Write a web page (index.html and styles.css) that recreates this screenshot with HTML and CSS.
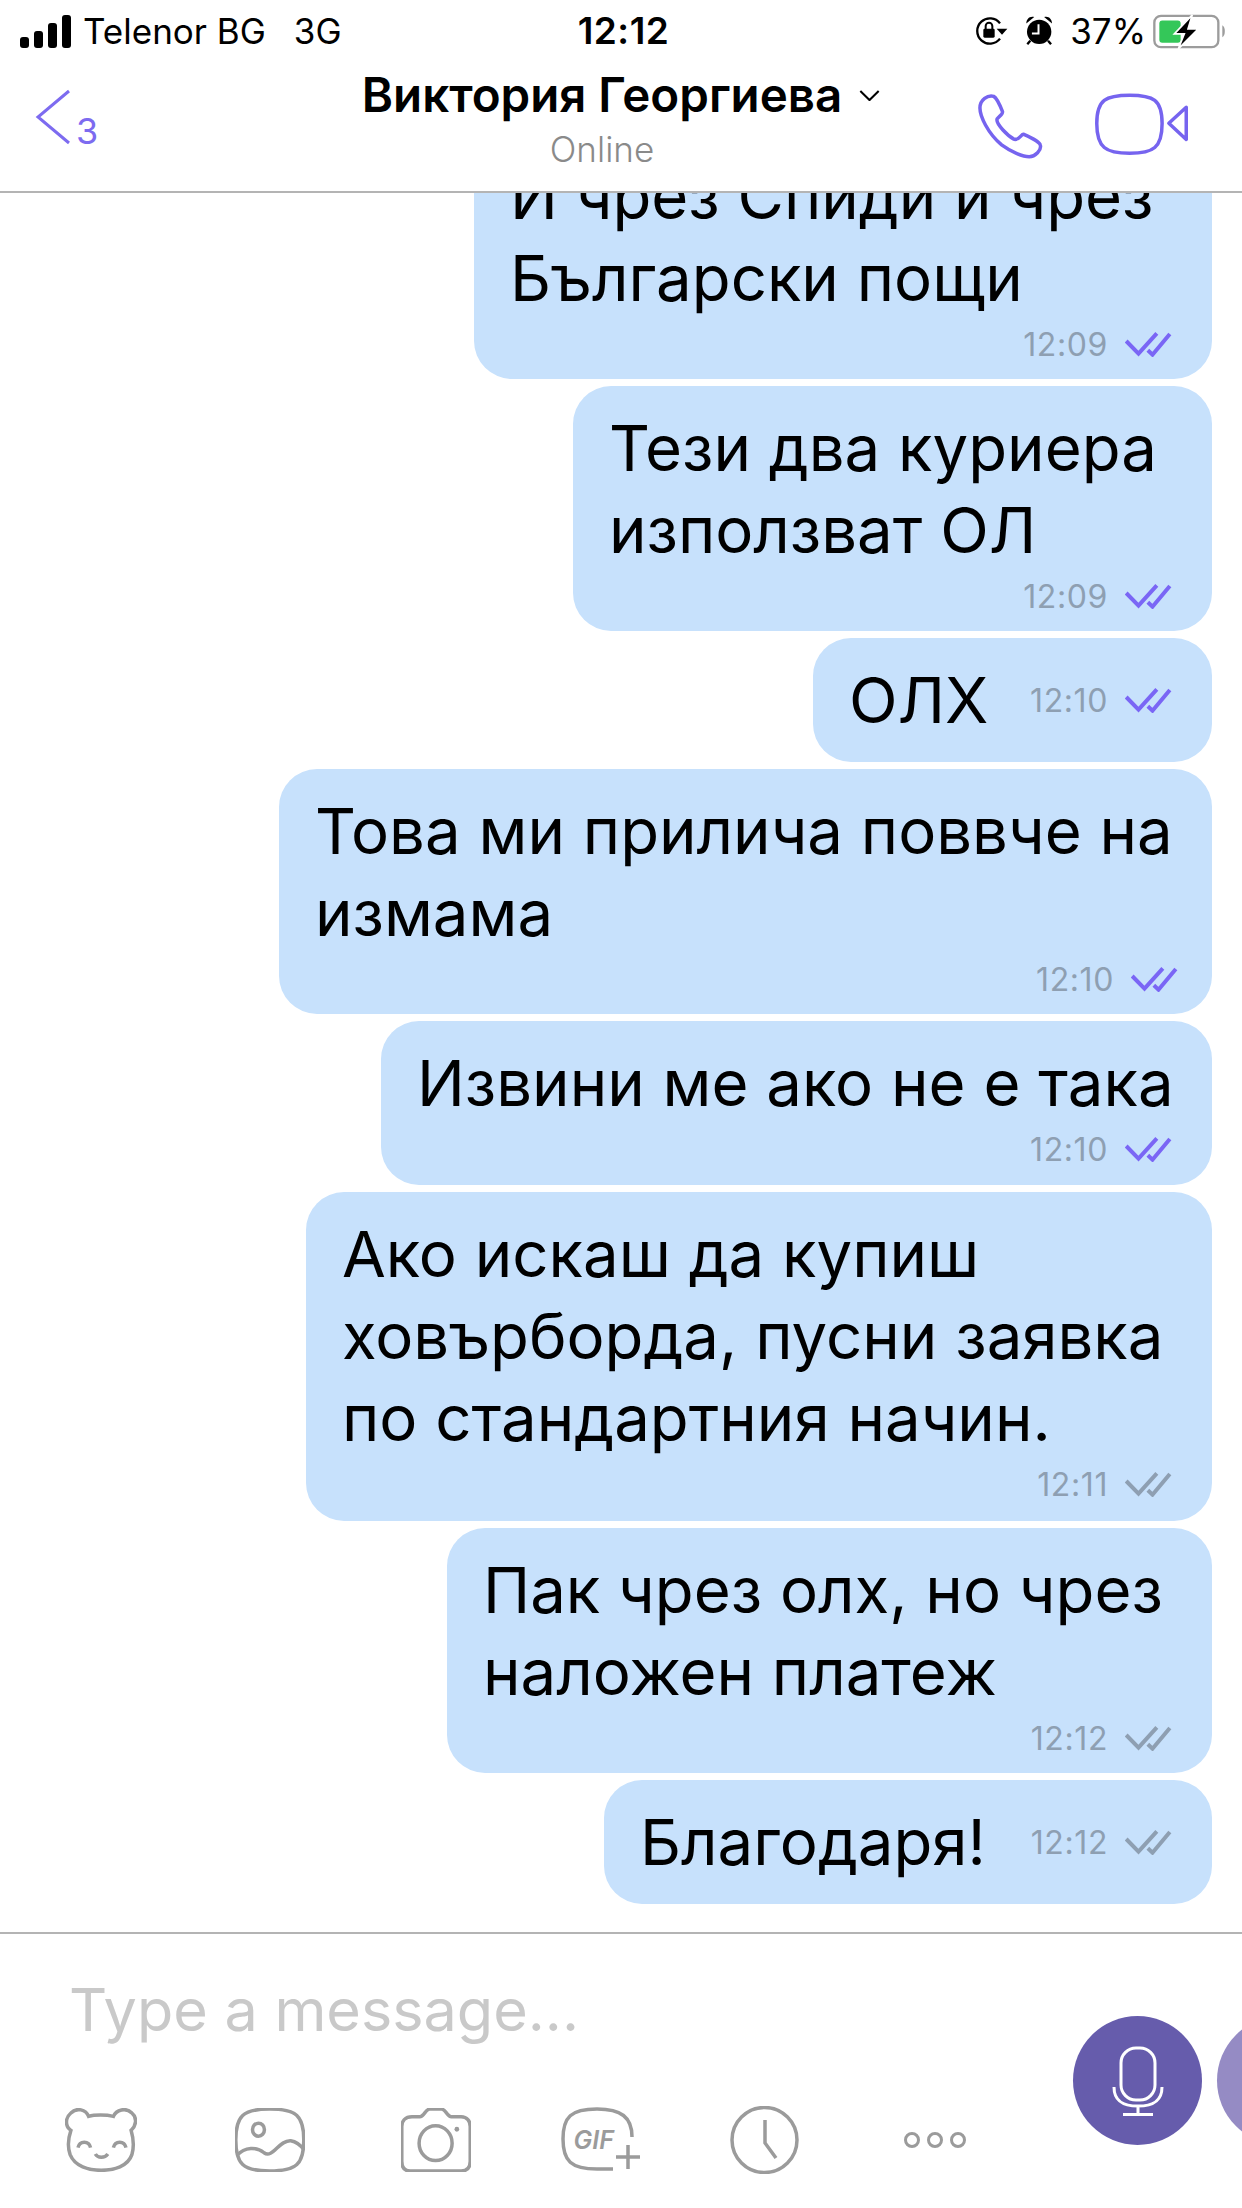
FILE: index.html
```html
<!DOCTYPE html>
<html lang="bg">
<head>
  <meta charset="UTF-8" />
  <title>Виктория Георгиева</title>
  <link rel="stylesheet" href="styles.css">
</head>
<body>

  <svg class="defs" width="0" height="0">
    <symbol id="ticks" viewBox="500 95 140 75">
      <path d="M503 122 L540 160 L595 99 M568 150 L582 163 L634 101" fill="none" stroke="currentColor" stroke-width="12"/>
    </symbol>
  </svg>

  <div class="page">

    <!-- Status bar -->
    <div class="status">
      <div class="status-left">
        <div class="signal"><i class="b1"></i><i class="b2"></i><i class="b3"></i><i class="b4"></i></div>
        <span class="carrier">Telenor BG</span>
        <span class="network">3G</span>
      </div>
      <div class="clock">12:12</div>
      <div class="status-right">
        <svg class="ic-rotate" viewBox="50 50 102 90">
          <path d="M128 118 A38 38 0 1 1 128 72" fill="none" stroke="#000" stroke-width="7"/>
          <path d="M118 88 H150 L134 106 Z" fill="#000"/>
          <rect x="78" y="88" width="34" height="27" rx="4" fill="#000"/>
          <path d="M85 90 V80 A10 10 0 0 1 105 80 V90" fill="none" stroke="#000" stroke-width="6"/>
        </svg>
        <svg class="ic-alarm" viewBox="200 45 88 95">
          <circle cx="243" cy="95" r="37" fill="#000"/>
          <path d="M204 70 C204 55 215 46 228 50 Z M282 70 C282 55 271 46 258 50 Z" fill="#000"/>
          <path d="M216 122 L207 133 M270 122 L279 133" fill="none" stroke="#000" stroke-width="7"/>
          <path d="M241 72 V100 H221" fill="none" stroke="#fff" stroke-width="6"/>
        </svg>
        <span class="percent">37%</span>
        <svg class="ic-battery" viewBox="575 35 225 110">
          <rect x="582" y="43" width="192" height="94" rx="20" fill="none" stroke="#9c9c9c" stroke-width="7"/>
          <rect x="597" y="57" width="64" height="67" rx="9" fill="#34c759"/>
          <path d="M786 71 C796 76 796 102 786 107 Z" fill="#9c9c9c"/>
          <path d="M696 40 L642 97 H672 L654 142 L714 82 H683 Z" fill="#000" stroke="#fff" stroke-width="5"/>
        </svg>
      </div>
    </div>

    <!-- Cabecera del chat -->
    <header class="chat-head">
      <div class="back">
        <svg class="ic-back" viewBox="0 0 36 56">
          <path d="M34 2 L3 28 L34 54" fill="none" stroke="#7d6bf0" stroke-width="3"/>
        </svg>
        <span class="back-count">3</span>
      </div>
      <div class="title">
        <div class="name-row">
          <span class="name">Виктория Георгиева</span>
          <svg class="ic-chevron" viewBox="0 0 22 12">
            <path d="M1 1 L11 11 L21 1" fill="none" stroke="#000" stroke-width="2.200"/>
          </svg>
        </div>
        <div class="online">Online</div>
      </div>
      <div class="calls">
        <svg class="ic-phone" viewBox="895 275 175 200" preserveAspectRatio="none">
          <path d="M940 285 C925 280 905 295 905 320 C905 345 925 395 960 430 C985 452 1015 465 1030 465 C1045 465 1062 445 1058 430 C1056 420 1025 403 1015 398 C1010 397 1003 420 990 412 C975 402 948 370 948 355 C948 347 965 340 962 330 C958 318 948 290 940 285 Z"/>
        </svg>
        <svg class="ic-video" viewBox="1195 280 245 190" preserveAspectRatio="none">
          <path d="M1285 287 C1345 287 1367 300 1367 372 C1367 445 1345 462 1285 462 C1225 462 1202 445 1202 372 C1202 300 1225 287 1285 287 Z"/>
          <path d="M1428 323 L1384 371 L1428 420 Z"/>
        </svg>
      </div>
    </header>

    <!-- Mensajes -->
    <main class="messages">
      <div class="bubble w738">
        <p>И чрез Спиди и чрез<br>Български пощи</p>
        <div class="meta"><span>12:09</span><svg class="ticks read"><use href="#ticks"/></svg></div>
      </div>
      <div class="bubble w639">
        <p>Тези два куриера<br>използват ОЛ</p>
        <div class="meta"><span>12:09</span><svg class="ticks read"><use href="#ticks"/></svg></div>
      </div>
      <div class="bubble inline w399">
        <p>ОЛХ</p>
        <div class="meta"><span>12:10</span><svg class="ticks read"><use href="#ticks"/></svg></div>
      </div>
      <div class="bubble w933">
        <p>Това ми прилича поввче на<br>измама</p>
        <div class="meta"><span>12:10</span><svg class="ticks read"><use href="#ticks"/></svg></div>
      </div>
      <div class="bubble w831">
        <p>Извини ме ако не е така</p>
        <div class="meta"><span>12:10</span><svg class="ticks read"><use href="#ticks"/></svg></div>
      </div>
      <div class="bubble w906">
        <p>Ако искаш да купиш<br>ховърборда, пусни заявка<br>по стандартния начин.</p>
        <div class="meta"><span>12:11</span><svg class="ticks"><use href="#ticks"/></svg></div>
      </div>
      <div class="bubble w765">
        <p>Пак чрез олх, но чрез<br>наложен платеж</p>
        <div class="meta"><span>12:12</span><svg class="ticks"><use href="#ticks"/></svg></div>
      </div>
      <div class="bubble inline w608">
        <p>Благодаря!</p>
        <div class="meta"><span>12:12</span><svg class="ticks"><use href="#ticks"/></svg></div>
      </div>
    </main>

    <!-- Caja de texto -->
    <footer class="composer">
      <div class="composer-main">
        <div class="placeholder">Type a message...</div>
        <div class="tools">
          <svg class="tool w72" viewBox="165 625 183 192" preserveAspectRatio="none">
            <path d="M225 650 C240 645 270 645 288 650 C295 630 320 622 335 640 C350 655 345 680 333 692 C340 720 340 745 335 765 C325 800 290 812 257 812 C225 812 190 800 178 765 C172 745 172 720 180 692 C165 680 165 655 180 640 C195 622 218 630 225 650 Z"/>
            <path d="M198 744 C202 722 226 722 230 744 M288 744 C292 722 316 722 320 744 M242 763 C248 776 266 776 274 763"/>
          </svg>
          <svg class="tool w70" viewBox="595 627 176 186" preserveAspectRatio="none">
            <path d="M682 630 C750 630 768 650 768 720 C768 790 750 810 682 810 C615 810 597 790 597 720 C597 650 615 630 682 630 Z"/>
            <ellipse cx="654" cy="690" rx="15" ry="19"/>
            <path d="M600 765 C620 738 650 740 668 757 C690 775 705 720 735 722 C750 725 760 735 768 748"/>
          </svg>
          <svg class="tool w70" viewBox="1012 627 178 184" preserveAspectRatio="none">
            <path d="M1040 652 H1060 C1070 652 1075 630 1085 630 H1115 C1125 630 1130 652 1140 652 H1165 C1180 652 1188 665 1188 680 V780 C1188 800 1178 808 1165 808 H1035 C1022 808 1014 800 1014 780 V680 C1014 665 1022 652 1040 652 Z"/>
            <ellipse cx="1100" cy="728" rx="42" ry="50"/>
            <ellipse class="solid" cx="1154" cy="688" rx="6" ry="7"/>
          </svg>
          <div class="gif">
            <svg viewBox="0 0 79 66">
              <path d="M71 30 C71 10 60 2 36 2 C10 2 2 10 2 32 C2 54 10 62 36 62 H52"/>
              <path d="M67 38 V62 M55 50 H79"/>
            </svg>
            <span>GIF</span>
          </div>
          <svg class="tool w69" viewBox="0 0 69 68">
            <circle cx="34.500" cy="34" r="32.500"/>
            <path d="M35 14 V37 L46 52"/>
          </svg>
          <div class="dots"><i></i><i></i><i></i></div>
        </div>
      </div>
      <div class="actions">
        <div class="round">
          <svg class="ic-mic" viewBox="0 0 52 70">
            <rect x="9" y="2" width="34" height="52" rx="15"/>
            <path d="M2 41 C2 56 12 60 26 60 C40 60 50 56 50 41 M26 60 V68 M11 68.500 H41"/>
          </svg>
        </div>
        <div class="round second"></div>
      </div>
    </footer>

  </div>

</body>
</html>
```

FILE: styles.css
```css
* {
  box-sizing: border-box;
}

html,
body {
  margin: 0;
  height: 100%;
  background: #fff;
  overflow: hidden;
}

body {
  font-family: Inter, "Liberation Sans", sans-serif;
  color: #000;
}

.defs {
  position: absolute;
}

.page {
  width: 1242px;
  height: 2208px;
  display: flex;
  flex-direction: column;
  overflow: hidden;
}

/* Status bar */
.status {
  height: 60px;
  padding: 14px 15px 0 20px;
  display: grid;
  grid-template-columns: 1fr auto 1fr;
  flex-shrink: 0;
}

.status-left,
.status-right {
  display: flex;
  align-items: center;
  height: 34px;
}

.status-right {
  justify-content: flex-end;
}

.signal {
  display: flex;
  align-items: flex-end;
  gap: 5px;
  height: 33px;
  width: 51px;
}

.signal i {
  width: 9px;
  background: #000;
  border-radius: 3px;
}

.signal .b1 { height: 11px; }
.signal .b2 { height: 17px; }
.signal .b3 { height: 25px; }
.signal .b4 { height: 33px; }

.carrier {
  margin-left: 12px;
  font-size: 35px;
}

.network {
  margin-left: 28px;
  font-size: 35px;
}

.clock {
  font-size: 37px;
  font-weight: 600;
  letter-spacing: 0.500px;
  line-height: 34px;
}

.ic-rotate {
  width: 34px;
  height: 30px;
}

.ic-alarm {
  width: 29px;
  height: 32px;
  margin-left: 17px;
}

.percent {
  margin-left: 16px;
  font-size: 35px;
}

.ic-battery {
  width: 75px;
  height: 37px;
  margin-left: 6px;
}

/* Cabecera */
.chat-head {
  height: 133px;
  flex-shrink: 0;
  display: grid;
  grid-template-columns: 300px 604px 1fr;
  border-bottom: 2px solid #b4b4b4;
}

.back {
  display: flex;
  align-items: flex-start;
  padding: 29px 0 0 35px;
}

.ic-back {
  width: 36px;
  height: 56px;
}

.back-count {
  margin: 24px 0 0 5px;
  font-size: 36px;
  line-height: 36px;
  color: #7d6bf0;
}

.title {
  text-align: center;
  padding-top: 7px;
}

.name-row {
  display: flex;
  justify-content: center;
  align-items: center;
  height: 54px;
}

.name {
  font-weight: 600;
  font-size: 47.500px;
  white-space: nowrap;
}

.ic-chevron {
  width: 21px;
  height: 11px;
  margin: 2px -38px 0 17px;
  flex-shrink: 0;
}

.online {
  margin-top: 10px;
  font-weight: 300;
  font-size: 35px;
  line-height: 36px;
  color: #8a8a8a;
}

.calls {
  display: flex;
  align-items: flex-start;
  padding: 33px 0 0 72px;
}

.calls path {
  fill: none;
  stroke: #7664ef;
  stroke-width: 3.500px;
  stroke-linejoin: round;
  vector-effect: non-scaling-stroke;
}

.ic-phone {
  width: 69px;
  height: 67px;
}

.ic-video {
  width: 97px;
  height: 63px;
  margin-left: 49px;
}

/* Mensajes */
.messages {
  flex: 1;
  min-height: 0;
  display: flex;
  flex-direction: column;
  justify-content: flex-end;
  align-items: flex-end;
  gap: 7px;
  padding: 0 30px 28px 0;
  overflow: hidden;
}

.bubble {
  flex-shrink: 0;
  background: #c7e1fc;
  border-radius: 38px;
  padding: 21px 40px 20px 36px;
}

.bubble p {
  margin: 0;
  font-size: 63.500px;
  line-height: 82px;
  white-space: nowrap;
}

.meta {
  display: flex;
  justify-content: flex-end;
  align-items: center;
  gap: 17px;
  margin-top: 10px;
  height: 30px;
  font-size: 32px;
  letter-spacing: 0.600px;
  color: #8e9fb2;
}

.ticks {
  width: 47px;
  height: 25px;
  color: #8e9fb2;
}

.ticks.read {
  color: #7a66f5;
}

.bubble.inline {
  display: flex;
  justify-content: space-between;
  align-items: center;
  padding-bottom: 21px;
}

.bubble.inline .meta {
  margin-top: 0;
}

.w738 { width: 738px; }
.w639 { width: 639px; }
.w399 { width: 399px; }
.w933 { width: 933px; }
.w933 .meta { margin-right: -6px; }
.w831 { width: 831px; padding-bottom: 21px; }
.w906 { width: 906px; padding-bottom: 22px; }
.w765 { width: 765px; }
.w608 { width: 608px; }

/* Caja de texto */
.composer {
  height: 276px;
  flex-shrink: 0;
  border-top: 2px solid #b4b4b4;
  display: flex;
}

.composer-main {
  width: 1073px;
  flex-shrink: 0;
}

.placeholder {
  padding: 36px 0 0 69px;
  font-size: 59.300px;
  line-height: 80px;
  color: #c9c9c9;
}

.tools {
  margin-top: 56px;
  padding-left: 17px;
  display: grid;
  grid-template-columns: 168px 170px 162px 166px 162px 180px;
  justify-items: center;
  align-items: center;
}

.tool {
  height: 64px;
}

.tool path,
.tool ellipse,
.tool circle,
.gif path {
  fill: none;
  stroke: #9b9b9b;
  stroke-width: 3.500px;
  vector-effect: non-scaling-stroke;
}

.tool .solid {
  fill: #9b9b9b;
  stroke: none;
}

.w72 { width: 72px; }
.w70 { width: 70px; }
.w69 { width: 69px; height: 68px; }

.gif {
  position: relative;
  width: 79px;
  height: 66px;
}

.gif svg {
  display: block;
  width: 79px;
  height: 66px;
}

.gif span {
  position: absolute;
  left: 13px;
  top: 18px;
  font-size: 25px;
  line-height: 30px;
  font-weight: 600;
  font-style: italic;
  color: #9b9b9b;
}

.dots {
  display: flex;
  gap: 7px;
}

.dots i {
  width: 16px;
  height: 16px;
  border: 3px solid #9b9b9b;
  border-radius: 50%;
}

.actions {
  display: flex;
  gap: 15px;
  padding-top: 82px;
}

.round {
  width: 129px;
  height: 129px;
  flex-shrink: 0;
  border-radius: 50%;
  background: #665cac;
  display: flex;
  align-items: center;
  justify-content: center;
}

.round.second {
  background: #958bc4;
}

.ic-mic {
  width: 52px;
  height: 70px;
}

.ic-mic rect,
.ic-mic path {
  fill: none;
  stroke: #fff;
  stroke-width: 3px;
}
```
